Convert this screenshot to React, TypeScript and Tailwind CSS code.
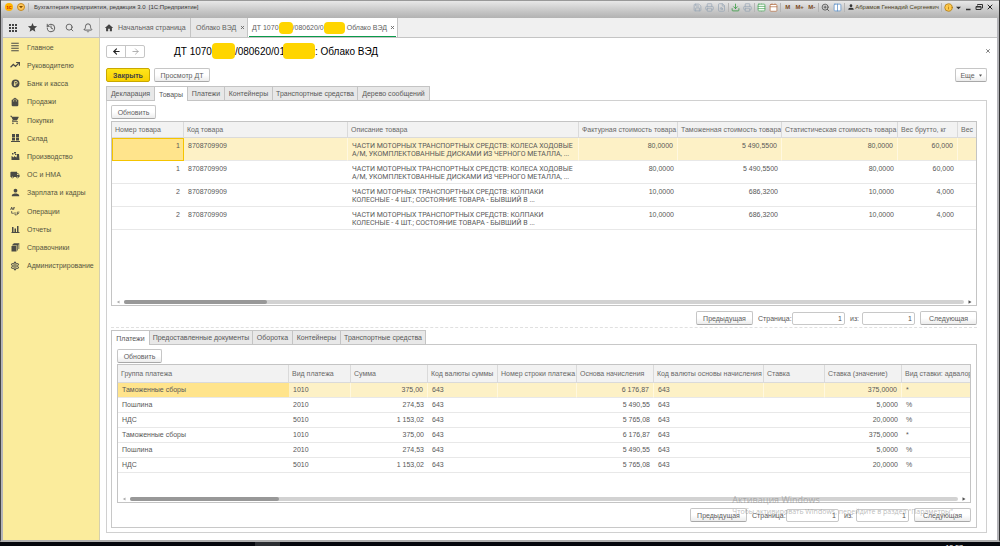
import React from 'react';
import {
  ArrowLeft, ArrowRight, Bell, Calendar, Columns2, FileSearch, History, Info,
  Printer, Save, Search, Table, Download, X, ZoomIn,
} from 'lucide-react';
import {
  MdDensitySmall, MdHome, MdLocalShipping, MdOutlineSettings,
  MdPerson, MdShoppingBag, MdShoppingCart, MdStar, MdApps,
} from 'react-icons/md';

const ic = 'h-[10px] w-[10px]';

function RubleIcon() {
  return (
    <svg viewBox="0 0 16 16" className="h-[9px] w-[9px]">
      <circle cx="8" cy="8" r="7" fill="currentColor" />
      <path d="M6.500 12.500V4.500H9a2.200 2.200 0 0 1 0 4.400H5M5 10.800h4" fill="none" stroke="#fbec9c" strokeWidth="1.500" />
    </svg>
  );
}

function TrendIcon() {
  return (
    <svg viewBox="0 0 18 14" className="h-[8px] w-[10px]" fill="none" stroke="currentColor" strokeWidth="2.200">
      <path d="M1 11l5-5 4 3.500L15.500 3.500" />
      <path d="M11 2.500h6v6" />
    </svg>
  );
}

function WarehouseIcon() {
  return (
    <svg viewBox="0 0 18 16" className="h-[8px] w-[9px]" fill="currentColor">
      <path d="M2 0h6v6H2zM10 0h6v6h-6zM2 7h6v6H2zM10 7h6v6h-6zM0 14h18v2H0z" />
    </svg>
  );
}

function PlantIcon() {
  return (
    <svg viewBox="0 0 18 16" className="h-[8px] w-[9px]" fill="currentColor">
      <path d="M1 16V8l5 3V8l5 3 1-5V4h4l1 12zM2 2h3v3H2zM6 0h4v3H6zM8 4h3v2H8z" />
    </svg>
  );
}

function OperationsIcon() {
  return (
    <svg viewBox="0 0 18 18" className="h-[10px] w-[10px]" fill="none" stroke="currentColor" strokeWidth="1.400">
      <path d="M1 7l2-5 2 5M2 5h2M6 7V3h3M6 5h2M9 11v5h3M13 16v-5h4M13 13.500h3M3 9v4h4" />
    </svg>
  );
}

function BooksIcon() {
  return (
    <svg viewBox="0 0 18 18" className="h-[9px] w-[9px]" fill="currentColor">
      <path d="M1 6h10v11H1zM3 4h9.500v11H14V2.500H4zM6 1h10.500v11H15V2H6z" />
      <path d="M2 5l3-4h12l-4 4z" />
    </svg>
  );
}

function BarsIcon() {
  return (
    <svg viewBox="0 0 18 16" className="h-[8px] w-[9px]" fill="currentColor">
      <path d="M2 4h3v10H2zM7 7h3v7H7zM12 2h3v12h-3zM1 14h16v2H1z" />
    </svg>
  );
}

const sections: [string, React.ReactNode][] = [
  ['Главное', <MdDensitySmall className={ic} />],
  ['Руководителю', <TrendIcon />],
  ['Банк и касса', <RubleIcon />],
  ['Продажи', <MdShoppingBag className={ic} />],
  ['Покупки', <MdShoppingCart className={ic} />],
  ['Склад', <WarehouseIcon />],
  ['Производство', <PlantIcon />],
  ['ОС и НМА', <MdLocalShipping className={ic} />],
  ['Зарплата и кадры', <MdPerson className="h-[11px] w-[11px]" />],
  ['Операции', <OperationsIcon />],
  ['Отчеты', <BarsIcon />],
  ['Справочники', <BooksIcon />],
  ['Администрирование', <MdOutlineSettings className={ic} />],
];

function Button({ children, className = '' }: { children: React.ReactNode; className?: string }) {
  return (
    <button
      type="button"
      className={`flex h-[14px] items-center justify-center rounded-[2px] border border-[#c6c6c6] border-b-[#a8a8a8] bg-linear-to-b from-white from-50% to-[#ececec] text-[#606060] ${className}`}
    >
      {children}
    </button>
  );
}

function Tabs({ items, active }: { items: [string, string][]; active: number }) {
  return (
    <div role="tablist" className="-mb-px flex">
      {items.map(([label, width], i) => (
        <button
          key={label}
          type="button"
          role="tab"
          aria-selected={i === active}
          className={`h-[15px] whitespace-nowrap border-t border-r border-[#c4c4c4] first:border-l ${width} ${
            i === active ? 'bg-white' : 'border-b bg-[#e8e8e8]'
          }`}
        >
          {label}
        </button>
      ))}
    </div>
  );
}

function ScrollTrack({ thumb }: { thumb: string }) {
  return (
    <div className="flex h-[6px] items-center gap-[4px] px-[4px]">
      <svg viewBox="0 0 4 4" className="h-[4px] w-[4px]"><path d="M3.500 .5v3L.8 2z" fill="#aaa" /></svg>
      <div className="h-[4px] flex-1 rounded-full bg-[#d2d2d2]">
        <div className={`h-full rounded-full bg-[#989898] ${thumb}`} />
      </div>
      <svg viewBox="0 0 4 4" className="h-[4px] w-[4px]"><path d="M.5 .3v3.400L3.500 2z" fill="#555" /></svg>
    </div>
  );
}

function Pager({ id }: { id: string }) {
  const box = 'h-[13px] w-[53px] rounded-[2px] border border-[#c8c8c8] bg-white pr-[2px] text-right text-[#555]';
  return (
    <div className="flex items-center justify-end">
      <Button className="w-[57px]">Предыдущая</Button>
      <label htmlFor={`${id}-page`} className="w-[39px] pl-[5px]">Страница:</label>
      <input id={`${id}-page`} defaultValue="1" className={box} />
      <label htmlFor={`${id}-total`} className="w-[17px] pl-[5px]">из:</label>
      <input id={`${id}-total`} defaultValue="1" className={box} />
      <Button className="ml-[5px] w-[57px]">Следующая</Button>
    </div>
  );
}

type Column = { title: string; width: string; right?: boolean; description?: boolean };

const goodsColumns: Column[] = [
  { title: 'Номер товара', width: 'w-[72px]', right: true },
  { title: 'Код товара', width: 'w-[164px]' },
  { title: 'Описание товара', width: 'w-[231px]', description: true },
  { title: 'Фактурная стоимость товара', width: 'w-[99px]', right: true },
  { title: 'Таможенная стоимость товара', width: 'w-[104px]', right: true },
  { title: 'Статистическая стоимость товара', width: 'w-[116px]', right: true },
  { title: 'Вес брутто, кг', width: 'w-[60px]', right: true },
  { title: 'Вес', width: '' },
];

const wheels = 'ЧАСТИ МОТОРНЫХ ТРАНСПОРТНЫХ СРЕДСТВ: КОЛЕСА ХОДОВЫЕ\nА/М, УКОМПЛЕКТОВАННЫЕ ДИСКАМИ ИЗ ЧЕРНОГО МЕТАЛЛА, ...';
const caps = 'ЧАСТИ МОТОРНЫХ ТРАНСПОРТНЫХ СРЕДСТВ: КОЛПАКИ\nКОЛЕСНЫЕ - 4 ШТ.; СОСТОЯНИЕ ТОВАРА - БЫВШИЙ В ...';

const goods = [
  ['1', '8708709909', wheels, '80,0000', '5 490,5500', '80,0000', '60,000', ''],
  ['1', '8708709909', wheels, '80,0000', '5 490,5500', '80,0000', '60,000', ''],
  ['2', '8708709909', caps, '10,0000', '686,3200', '10,0000', '4,000', ''],
  ['2', '8708709909', caps, '10,0000', '686,3200', '10,0000', '4,000', ''],
];

const paymentColumns: Column[] = [
  { title: 'Группа платежа', width: 'w-[171px]' },
  { title: 'Вид платежа', width: 'w-[62px]' },
  { title: 'Сумма', width: 'w-[77px]', right: true },
  { title: 'Код валюты суммы', width: 'w-[70px]' },
  { title: 'Номер строки платежа', width: 'w-[79px]' },
  { title: 'Основа начисления', width: 'w-[77px]', right: true },
  { title: 'Код валюты основы начисления', width: 'w-[110px]' },
  { title: 'Ставка', width: 'w-[61px]' },
  { title: 'Ставка (значение)', width: 'w-[77px]', right: true },
  { title: 'Вид ставки: адвалор', width: '' },
];

const fee = ['Таможенные сборы', '1010', '375,00', '643', '', '6 176,87', '643', '', '375,0000', '*'];
const duty = ['Пошлина', '2010', '274,53', '643', '', '5 490,55', '643', '', '5,0000', '%'];
const vat = ['НДС', '5010', '1 153,02', '643', '', '5 765,08', '643', '', '20,0000', '%'];
const payments = [fee, duty, vat, fee, duty, vat];

function DataTable({ columns, rows, tall }: { columns: Column[]; rows: string[][]; tall?: boolean }) {
  return (
    <table className="w-full table-fixed border-separate border-spacing-0">
      <thead>
        <tr className={tall ? 'h-[16px]' : 'h-[18px]'}>
          {columns.map((c) => (
            <th
              key={c.title}
              scope="col"
              className={`overflow-hidden whitespace-nowrap border-r border-b border-[#dadada] bg-[#f2f2f2] p-0 pl-[3px] text-left font-normal text-[#686868] last:border-r-0 ${c.width}`}
            >
              {c.title}
            </th>
          ))}
        </tr>
      </thead>
      <tbody>
        {rows.map((row, r) => (
          <tr key={r} className={tall ? 'h-[23px] align-top' : 'h-[15px]'}>
            {row.map((cell, i) => (
              <td
                key={i}
                className={`whitespace-pre border-b border-[#e8e8e8] p-0 px-[4px] leading-[8px] ${tall ? 'pt-[4px]' : ''} ${
                  columns[i].right ? 'text-right' : ''
                } ${columns[i].description ? 'font-[Roboto,sans-serif]' : ''} ${
                  r > 0
                    ? ''
                    : i > 0
                      ? 'border-r border-r-[#fff8e0] bg-[#fdf1c6] last:border-r-0'
                      : tall
                        ? 'bg-[#ffe48c] outline outline-offset-[-1px] outline-[#f5c400]'
                        : 'bg-[#ffe48c]'
                }`}
              >
                {cell}
              </td>
            ))}
          </tr>
        ))}
      </tbody>
    </table>
  );
}

function Mask({ className }: { className: string }) {
  return <span className={`inline-block shrink-0 rounded-[4px] bg-[#ffd500] ${className}`} />;
}

function TitleBar() {
  const pale = 'h-[9px] w-[9px] text-[#9aa7b5]';
  const sep = <span className="-mx-px h-[9px] w-px bg-[#b5b5b5]" />;
  return (
    <header className="flex h-[18px] items-start justify-between border-t border-[#999] bg-linear-to-b from-[#e8e8e8] via-[#c6c6c6] via-60% to-[#b2b2b2] pr-[5px] pl-[4px] text-[6px]">
      <div className="flex h-[12px] items-center">
        <span className="flex h-[8px] w-[8px] items-center justify-center rounded-full bg-[#ffb400] text-[4px] font-bold text-[#c00]">1С</span>
        <span className="ml-[4px] flex h-[8px] w-[8px] items-center justify-center rounded-full border border-[#c78a20] bg-[#ffc659]">
          <svg viewBox="0 0 6 6" className="h-[4px] w-[4px]"><path d="M0 1.500h6L3 5z" fill="#7a4a00" /></svg>
        </span>
        <span className="mr-[5px] ml-[3px] h-[9px] w-px bg-[#b5b5b5]" />
        <span className="text-[#333]">Бухгалтерия предприятия, редакция 3.0&nbsp; [1С:Предприятие]</span>
      </div>
      <div className="flex h-[12px] items-center gap-[3px] text-[#444]">
        <Save className={pale} />
        <Printer className={pale} />
        <FileSearch className={pale} />
        {sep}
        <Download className="h-[9px] w-[9px] text-[#2f9a3a]" />
        <Printer className={pale} />
        {sep}
        <Table className="h-[9px] w-[9px] fill-white text-[#4ba55a]" />
        <Calendar className="h-[9px] w-[9px] fill-white text-[#b5734a]" />
        {sep}
        <b className="w-[9px] text-center text-[#7a4a1c]">M</b>
        <b className="w-[9px] text-center text-[#7a4a1c]">M+</b>
        <b className="w-[9px] text-center text-[#7a4a1c]">M-</b>
        {sep}
        <ZoomIn className="h-[9px] w-[9px]" />
        <Columns2 className="h-[9px] w-[9px] fill-white text-[#5a8fc8]" />
        {sep}
        <MdPerson className="h-[8px] w-[8px] text-[#333]" />
        <span className="-ml-[3px] whitespace-nowrap text-[#4d431c]">Абрамов Геннадий Сергеевич</span>
        {sep}
        <Info className="h-[9px] w-[9px] fill-[#ffc94a] text-[#a87410]" />
        <svg viewBox="0 0 6 6" className="h-[5px] w-[5px]"><path d="M0 2h6L3 5z" fill="#333" /></svg>
        <svg viewBox="0 0 8 8" className="h-[8px] w-[8px]" stroke="#333" strokeWidth="1.500"><path d="M2 6.500h4.500" /></svg>
        <svg viewBox="0 0 8 8" className="h-[8px] w-[8px]" fill="none" stroke="#333"><path d="M2.500 2.500v-1h5v3.500h-1M1 3.500h5v3H1zM1 4h5" /></svg>
        <X className="h-[8px] w-[8px] text-[#222]" strokeWidth={3} />
      </div>
    </header>
  );
}

function WindowTabs() {
  return (
    <div className="flex h-[20px] border-b border-[#c4c4c4] bg-[#f0f0f0] text-[#606060]">
      <div className="flex w-[97px] items-center gap-[9px] border-r border-[#c4c4c4] bg-[#e6e6e6] pl-[4px] text-[#444]">
        <MdApps className="h-[12px] w-[12px]" />
        <MdStar className="-mx-px h-[11px] w-[11px]" />
        <History className="h-[10px] w-[10px]" />
        <Search className="h-[9px] w-[9px]" />
        <Bell className="h-[10px] w-[10px]" />
      </div>
      <button type="button" className="flex w-[91px] items-center gap-[4px] border-r border-[#c4c4c4] bg-[#e8e8e8] pl-[4px]">
        <MdHome className="h-[10px] w-[10px] text-[#444]" />
        Начальная страница
      </button>
      <button type="button" className="flex w-[57px] items-center gap-[4px] border-r border-[#c4c4c4] bg-[#e8e8e8] pl-[5px]">
        <span className="whitespace-nowrap">Облако ВЭД</span>
        <X className="h-[5px] w-[5px] shrink-0" strokeWidth={4} />
      </button>
      <button type="button" className="flex w-[150px] items-center border-r border-[#c4c4c4] bg-white px-px">
        <span className="mt-[1px] flex h-[17px] w-full items-center whitespace-nowrap border-b border-[#0a9b4a] pl-[3px]">
          ДТ 1070
          <Mask className="h-[12px] w-[14px]" />
          /080620/0
          <Mask className="h-[12px] w-[21px]" />
          <span className="ml-[2px]">Облако ВЭД</span>
          <X className="ml-[3px] h-[5px] w-[5px] shrink-0" strokeWidth={4} />
        </span>
      </button>
    </div>
  );
}

export default function App() {
  return (
    <div className="flex min-h-screen flex-col bg-black font-['Liberation_Sans',Arial,sans-serif] text-[7px] leading-[9px] text-[#585858]">
      <div className="flex flex-1 flex-col border-r border-b-2 border-l border-r-[#333] border-b-[#b0b0b0] border-l-[#444] bg-white">
        <TitleBar />
        <div className="flex flex-1 flex-col border-r-2 border-l-2 border-[#b4b4b8]">
          <WindowTabs />
          <div className="flex flex-1">
            <nav className="w-[97px] shrink-0 border-r border-[#d5d0ae] bg-[#fbec9c]">
              <ul className="grid h-[237px] auto-rows-fr">
                {sections.map(([label, icon]) => (
                  <li key={label} className="flex">
                    <a href="#" className="flex flex-1 items-center whitespace-nowrap text-[#55553f]">
                      <span className="flex w-[24px] justify-center text-[#4a4a45]">{icon}</span>
                      {label}
                    </a>
                  </li>
                ))}
              </ul>
            </nav>

            <main className="min-w-0 flex-1 pt-[6px] pr-[10px] pb-[6px] pl-[6px]">
              <div className="flex h-[14px] items-center">
                <div className="flex h-[13px] w-[39px] rounded-[2px] border border-[#c6c6c6]">
                  <button type="button" aria-label="Назад" className="flex flex-1 items-center justify-center border-r border-[#c6c6c6]">
                    <ArrowLeft className="h-[9px] w-[9px] text-[#222]" strokeWidth={3} />
                  </button>
                  <button type="button" aria-label="Вперед" className="flex flex-1 items-center justify-center">
                    <ArrowRight className="h-[9px] w-[9px] text-[#999]" />
                  </button>
                </div>
                <h1 className="ml-[29px] flex flex-1 items-center whitespace-nowrap text-[10px] text-black">
                  ДТ 1070
                  <Mask className="h-[16px] w-[23px]" />
                  /080620/01
                  <Mask className="-ml-[2px] h-[16px] w-[32px]" />
                  : Облако ВЭД
                </h1>
                <button type="button" aria-label="Закрыть окно" className="-mr-[4px]">
                  <X className="h-[6px] w-[6px]" strokeWidth={3} />
                </button>
              </div>

              <div className="mt-[10px] flex">
                <button type="button" className="h-[14px] w-[44px] rounded-[2px] border border-[#c9a800] bg-linear-to-b from-[#ffe61a] to-[#f7d000] font-bold text-[#444]">
                  Закрыть
                </button>
                <Button className="ml-[4px] w-[56px]">Просмотр ДТ</Button>
                <Button className="ml-auto w-[32px] gap-[4px]">
                  Еще
                  <svg viewBox="0 0 4 4" className="h-[3px] w-[3px]"><path d="M0 .5h4L2 3.500z" fill="#555" /></svg>
                </Button>
              </div>

              <div className="mt-[4px]">
                <Tabs
                  active={1}
                  items={[
                    ['Декларация', 'w-[49px]'],
                    ['Товары', 'w-[33px]'],
                    ['Платежи', 'w-[37px]'],
                    ['Контейнеры', 'w-[48px]'],
                    ['Транспортные средства', 'w-[85px]'],
                    ['Дерево сообщений', 'w-[72px]'],
                  ]}
                />
                <section className="border border-[#d0d0d0] px-[4px] pt-[4px] pb-[4px] pr-[9px]">
                  <Button className="w-[45px]">Обновить</Button>
                  <div className="mt-[2px] flex min-h-[185px] flex-col border border-[#c4c4c4]">
                    <DataTable columns={goodsColumns} rows={goods} tall />
                    <div className="mt-auto"><ScrollTrack thumb="w-[17%]" /></div>
                  </div>
                  <div className="mt-[5px]"><Pager id="goods" /></div>
                  <div className="mt-[2px] border-t border-dashed border-[#e0e0e0]" />

                  <div className="mt-[2px]">
                    <Tabs
                      active={0}
                      items={[
                        ['Платежи', 'w-[39px]'],
                        ['Предоставленные документы', 'w-[103px]'],
                        ['Оборотка', 'w-[40px]'],
                        ['Контейнеры', 'w-[48px]'],
                        ['Транспортные средства', 'w-[85px]'],
                      ]}
                    />
                    <div className="border border-[#c8c8c8] px-[5px] pt-[4px] pb-[5px]">
                      <Button className="w-[45px]">Обновить</Button>
                      <div className="mt-px flex min-h-[139px] flex-col border border-[#c4c4c4]">
                        <DataTable columns={paymentColumns} rows={payments} />
                        <div className="mt-auto"><ScrollTrack thumb="w-[18%]" /></div>
                      </div>
                      <div className="relative mt-[5px]">
                        <Pager id="payments" />
                        <div className="pointer-events-none absolute right-[16px] bottom-[5px] whitespace-nowrap font-['Open_Sans',sans-serif] text-[7px] text-[#8c8c8c]/60">
                          <p className="text-[9px] leading-[12px]">Активация Windows</p>
                          <p className="leading-[11px]">Чтобы активировать Windows, перейдите в раздел "Параметры".</p>
                        </div>
                      </div>
                    </div>
                  </div>
                </section>
              </div>
            </main>
          </div>
        </div>
      </div>
      <footer className="flex h-[4px] justify-between overflow-hidden bg-[#05070c] pr-[37px] pl-[255px]">
        <span className="w-[25px] bg-[#2b2d31]" />
        <time className="pt-[2px] leading-[7px] text-white">18:57</time>
      </footer>
    </div>
  );
}
